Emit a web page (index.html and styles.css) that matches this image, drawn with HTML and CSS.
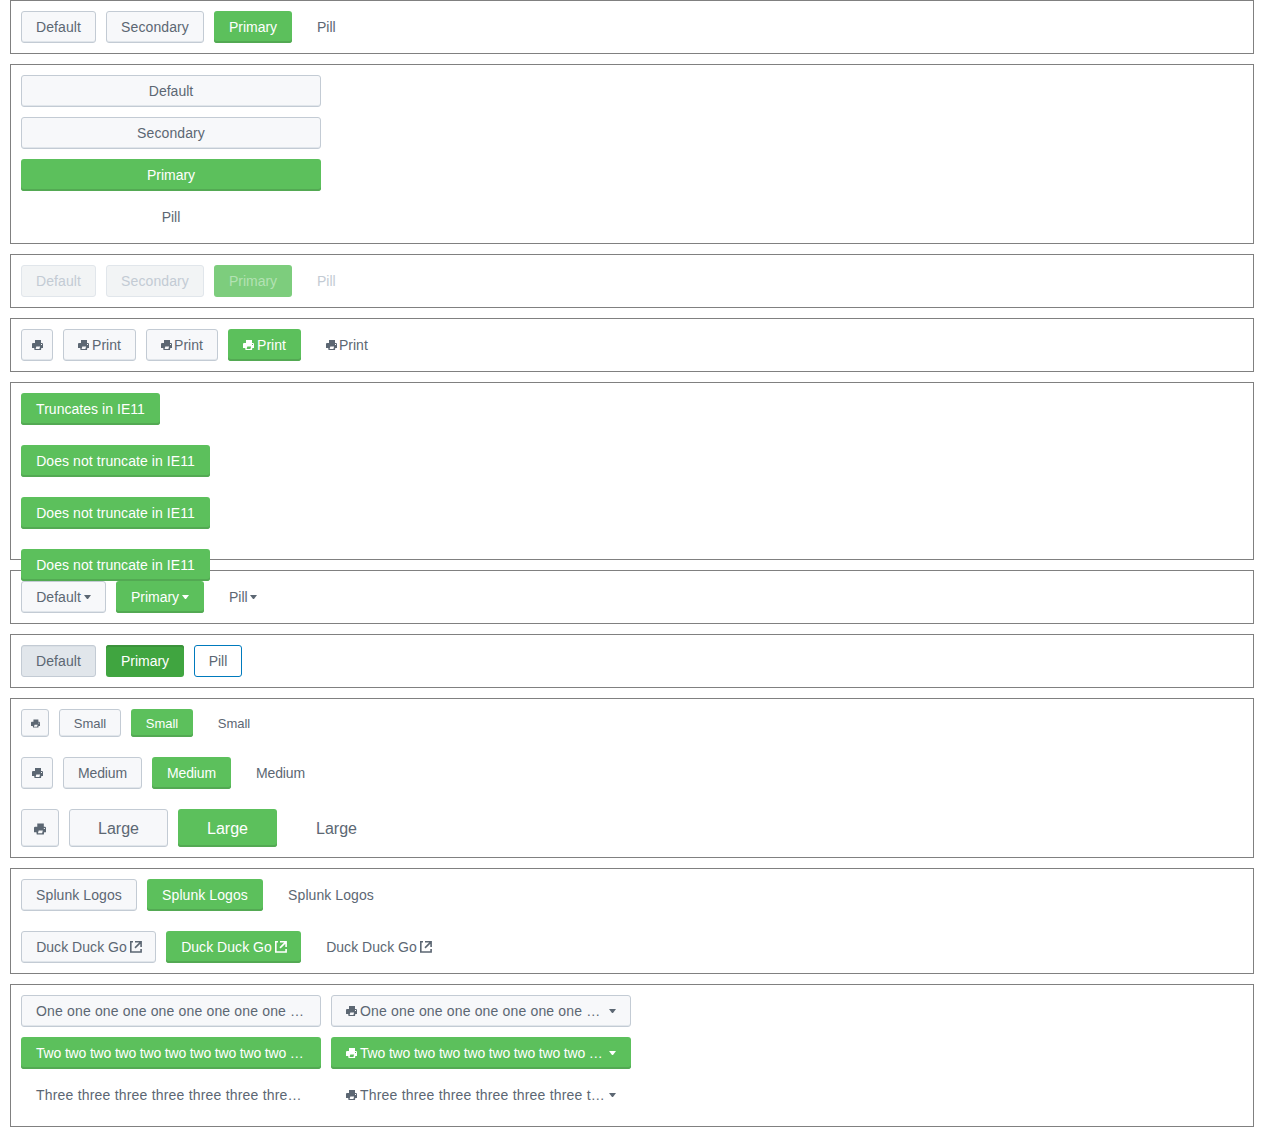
FILE: index.html
```
<!DOCTYPE html>
<html lang="en">
<head>
<meta charset="utf-8">
<title>Buttons</title>
<link rel="stylesheet" href="styles.css">
</head>
<body>
<svg class="defs" width="0" height="0">
  <symbol id="print" viewBox="0 0 11 10"><path fill-rule="evenodd" d="M3 0H9V3H10.300L11 3.700V8H9.300L9 10H2.500L2.200 8H0V4Q0 3 1 3H3zM4.300 6.400L3.600 9H7.400L8.100 6.400zM9 4v1H10v-1z"/></symbol>
  <symbol id="caret" viewBox="0 0 7 4"><path d="M0 0H7L4.200 3.700Q3.500 4.300 2.800 3.700z"/></symbol>
  <symbol id="external" viewBox="0 0 12 12"><path fill="none" stroke="currentColor" stroke-width="1.600" d="M3 .8H.8V11H11.100V8M5 .8H11.100V6M10.800 1.100L5 6.900"/></symbol>
</svg>
<main class="page">
  <section class="panel">
    <div class="row"><button class="btn w-default">Default</button><button class="btn w-secondary">Secondary</button><button class="btn primary w-primary">Primary</button><button class="btn pill">Pill</button></div>
  </section>
  <section class="panel stack">
    <button class="btn block">Default</button><button class="btn block wide-text">Secondary</button><button class="btn primary block">Primary</button><button class="btn pill block">Pill</button>
  </section>
  <section class="panel">
    <div class="row"><button class="btn w-default" disabled>Default</button><button class="btn w-secondary" disabled>Secondary</button><button class="btn primary w-primary" disabled>Primary</button><button class="btn pill" disabled>Pill</button></div>
  </section>
  <section class="panel">
    <div class="row">
      <button class="btn square" aria-label="Print"><svg class="print"><use href="#print"/></svg></button>
      <button class="btn spaced w-print"><svg class="print"><use href="#print"/></svg>Print</button>
      <button class="btn with-icon w-print-tight"><svg class="print"><use href="#print"/></svg>Print</button>
      <button class="btn primary spaced w-print"><svg class="print"><use href="#print"/></svg>Print</button>
      <button class="btn pill with-icon"><svg class="print"><use href="#print"/></svg>Print</button>
    </div>
  </section>
  <section class="panel lines overflow">
    <div class="row"><button class="btn primary w-truncates">Truncates in IE11</button></div>
    <div class="row"><button class="btn primary w-long">Does not truncate in IE11</button></div>
    <div class="row"><button class="btn primary w-long">Does not truncate in IE11</button></div>
    <div class="row"><button class="btn primary w-long">Does not truncate in IE11</button></div>
  </section>
  <section class="panel">
    <div class="row"><button class="btn w-default-menu">Default<svg class="caret"><use href="#caret"/></svg></button><button class="btn primary w-primary-menu">Primary<svg class="caret"><use href="#caret"/></svg></button><button class="btn pill">Pill<svg class="caret"><use href="#caret"/></svg></button></div>
  </section>
  <section class="panel">
    <div class="row"><button class="btn selected w-default">Default</button><button class="btn primary selected w-primary">Primary</button><button class="btn pill selected w-pill">Pill</button></div>
  </section>
  <section class="panel lines">
    <div class="row small"><button class="btn square" aria-label="Print"><svg class="print"><use href="#print"/></svg></button><button class="btn">Small</button><button class="btn primary">Small</button><button class="btn pill">Small</button></div>
    <div class="row medium"><button class="btn square" aria-label="Print"><svg class="print"><use href="#print"/></svg></button><button class="btn">Medium</button><button class="btn primary">Medium</button><button class="btn pill">Medium</button></div>
    <div class="row large"><button class="btn square" aria-label="Print"><svg class="print"><use href="#print"/></svg></button><button class="btn">Large</button><button class="btn primary">Large</button><button class="btn pill">Large</button></div>
  </section>
  <section class="panel lines">
    <div class="row logos"><button class="btn">Splunk Logos</button><button class="btn primary">Splunk Logos</button><button class="btn pill">Splunk Logos</button></div>
    <div class="row duck"><button class="btn">Duck Duck Go<svg class="external"><use href="#external"/></svg></button><button class="btn primary">Duck Duck Go<svg class="external"><use href="#external"/></svg></button><button class="btn pill">Duck Duck Go<svg class="external"><use href="#external"/></svg></button></div>
  </section>
  <section class="panel stack tall">
    <div class="row ones">
      <button class="btn block"><span class="label">One one one one one one one one one …</span></button>
      <button class="btn block menu"><svg class="print"><use href="#print"/></svg><span class="label">One one one one one one one one …</span><svg class="caret"><use href="#caret"/></svg></button>
    </div>
    <div class="row twos">
      <button class="btn primary block"><span class="label">Two two two two two two two two two two …</span></button>
      <button class="btn primary block menu"><svg class="print"><use href="#print"/></svg><span class="label">Two two two two two two two two two …</span><svg class="caret"><use href="#caret"/></svg></button>
    </div>
    <div class="row threes">
      <button class="btn pill block"><span class="label">Three three three three three three thre…</span></button>
      <button class="btn pill block menu"><svg class="print"><use href="#print"/></svg><span class="label">Three three three three three three t…</span><svg class="caret"><use href="#caret"/></svg></button>
    </div>
  </section>
</main>
</body>
</html>
```
FILE: styles.css
```
* { box-sizing: border-box; }
body { margin: 0 10px; background: #fff; font-family: "Liberation Sans", Arial, sans-serif; }
.defs { display: block; }
.page { display: flex; flex-direction: column; gap: 10px; }
.panel { border: 1px solid #808080; padding: 10px; }
.stack, .lines { display: flex; flex-direction: column; gap: 10px; }
.lines { gap: 20px; }
.overflow { height: 178px; position: relative; z-index: 1; }
.tall { height: 143px; }
.row { display: flex; gap: 10px; }
.btn {
  display: inline-flex; align-items: center; justify-content: center; flex: none;
  height: 32px; margin: 0; padding: 0 14px;
  border: 1px solid #c3cbd4; border-radius: 3px;
  background: #f7f8fa; color: #5c6773;
  box-shadow: inset 0 -1px 0 #e1e6eb;
  font: 14px/20px "Liberation Sans", Arial, sans-serif; white-space: nowrap;
}
.block { width: 300px; }
.wide-text { letter-spacing: .1px; }
.square { width: 32px; padding: 0; }
.primary { border: 0; padding: 0 15px; background: #5cc05c; color: #fff; box-shadow: inset 0 -2px 0 #53a953; }
.pill { border-color: transparent; background: transparent; box-shadow: none; }
.btn:disabled { background: #f2f4f5; border-color: #e1e6eb; color: #c3cbd4; box-shadow: none; }
.primary:disabled { background: #7dcd7d; color: #b3e2b3; }
.pill:disabled { background: transparent; border-color: transparent; }
.selected { background: #e1e6eb; box-shadow: inset 0 1px 0 #d9dfe5; }
.primary.selected { background: #40a540; box-shadow: inset 0 2px 0 #3b923b; }
.pill.selected { background: #fff; border-color: #007abd; box-shadow: none; }

.w-default { width: 75px; letter-spacing: .08px; }
.w-secondary { width: 98px; letter-spacing: .1px; }
.w-primary { width: 78px; }
.w-pill { width: 48px; }
.w-print { width: 73px; }
.w-print-tight { width: 72px; }
.w-truncates { width: 139px; letter-spacing: .04px; }
.w-long { width: 189px; letter-spacing: .07px; }
.w-default-menu { width: 85px; letter-spacing: .04px; }
.w-primary-menu { width: 88px; }

.small .btn { height: 28px; font-size: 13px; width: 62px; padding: 2px 0 0; }
.small .square { width: 28px; padding: 0; }
.medium .btn:not(.square) { width: 79px; letter-spacing: -.1px; }
.large .btn { height: 38px; font-size: 16px; width: 99px; padding: 2px 0 0; }
.large .square { width: 38px; }
.logos .btn { width: 116px; letter-spacing: .08px; }
.duck .btn { width: 135px; letter-spacing: .04px; }
.ones { letter-spacing: .16px; }
.twos { letter-spacing: -.17px; }
.threes { letter-spacing: .2px; }

.print { width: 11px; height: 10px; fill: currentColor; flex: none; }
.small .print { width: 9px; height: 9px; }
.large .print { width: 12px; height: 12px; }
.spaced .print { margin-right: 3px; }
.with-icon .print { margin-right: 2px; }
.caret { width: 7px; height: 4px; margin-left: 3px; fill: currentColor; flex: none; }
.pill .caret { margin-left: 2px; }
.external { width: 12px; height: 12px; margin-left: 3px; margin-right: -1px; flex: none; }
.label { flex: 1; min-width: 0; text-align: left; letter-spacing: inherit; }
.ones .btn, .twos .btn, .threes .btn { letter-spacing: inherit; }
.menu .print { margin-right: 3px; }
```
